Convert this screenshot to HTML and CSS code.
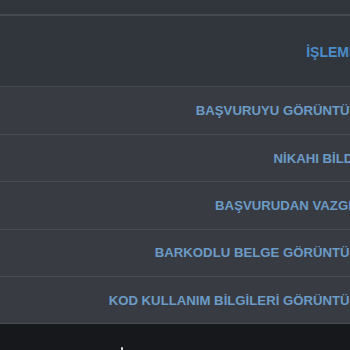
FILE: index.html
```html
<!DOCTYPE html>
<html lang="tr">
<head>
<meta charset="utf-8">
<link rel="stylesheet" href="styles.css">
</head>
<body>
<div class="page">
  <div class="top"></div>
  <div class="header"><span class="header-title">İŞLEMLER</span></div>
  <ul class="list">
    <li class="row"><span class="action">BAŞVURUYU GÖRÜNTÜLE</span></li>
    <li class="row"><span class="action">NİKAHI BİLDİR</span></li>
    <li class="row"><span class="action">BAŞVURUDAN VAZGEÇ</span></li>
    <li class="row"><span class="action">BARKODLU BELGE GÖRÜNTÜLE</span></li>
    <li class="row"><span class="action">KOD KULLANIM BİLGİLERİ GÖRÜNTÜLE</span></li>
  </ul>
  <div class="footer"><span class="dot"></span></div>
</div>
</body>
</html>
```
FILE: styles.css
```css
html, body {
  margin: 0;
  padding: 0;
  background: #16171b;
  overflow: hidden;
}
.page {
  width: 350px;
  height: 350px;
  overflow: hidden;
  font-family: "Liberation Sans", Arial, sans-serif;
  font-weight: bold;
  display: flex;
  flex-direction: column;
}
.top {
  height: 14px;
  flex: none;
  background: #31353c;
  border-bottom: 2px solid #474a52;
}
.header {
  height: 70px;
  flex: none;
  background: #31353c;
  border-bottom: 1px solid #464950;
  display: flex;
  align-items: center;
  justify-content: flex-end;
  width: 377px;
  box-sizing: content-box;
}
.header-title {
  font-size: 14px;
  color: #4b8dcb;
  white-space: nowrap;
  padding-top: 1px;
}
.list {
  list-style: none;
  margin: 0;
  padding: 0;
  flex: none;
}
.row {
  height: 45.8px;
  background: #393b42;
  border-bottom: 1px solid #4a4c53;
  display: flex;
  align-items: center;
  justify-content: flex-end;
  width: 366.5px;
  padding-top: 0.5px;
  box-sizing: content-box;
}
.row:first-child {
  height: 46.5px;
}
.action {
  font-size: 13.2px;
  color: #6b9bc6;
  white-space: nowrap;
}
.footer {
  flex: 1;
  background: #17181c;
  position: relative;
}
.dot {
  position: absolute;
  left: 121px;
  bottom: 0;
  width: 2px;
  height: 3px;
  background: #d8d8d8;
  border-radius: 1px 1px 0 0;
}
```
